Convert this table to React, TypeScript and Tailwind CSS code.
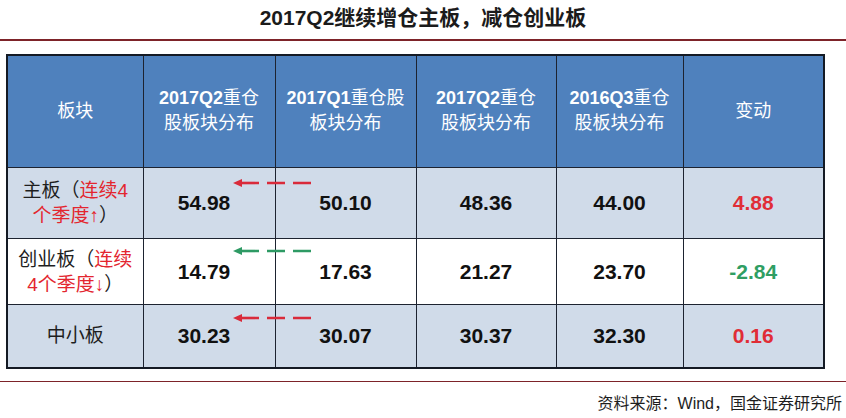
import React from "react";

const sans = "font-['Liberation_Sans','Noto_Sans_CJK_SC',sans-serif]";

const Arrow = ({ color, className }: { color: string; className: string }) => (
  <svg
    className={`absolute ${className}`}
    width="82"
    height="10"
    viewBox="0 0 82 10"
  >
    <polygon points="0,5 9,1 9,9" fill={color} />
    <line
      x1="8"
      y1="5"
      x2="82"
      y2="5"
      stroke={color}
      strokeWidth="2.6"
      strokeDasharray="18 8"
    />
  </svg>
);

const HeadCell = ({
  num,
  zh,
  width,
}: {
  num?: string;
  zh: React.ReactNode;
  width: string;
}) => (
  <th
    className={`${width} border border-[#1d2330] bg-[#4f81bd] px-1 text-center align-middle text-[18px] font-normal leading-[25px] text-white`}
  >
    {num && <span className="font-bold">{num}</span>}
    {zh}
  </th>
);

const rows = [
  {
    label: (
      <>
        主板（<span className="text-[#e3262f]">连续4</span>
        <br />
        <span className="text-[#e3262f]">个季度↑</span>）
      </>
    ),
    values: ["54.98", "50.10", "48.36", "44.00"],
    change: "4.88",
    changeColor: "text-[#e02d36]",
    bg: "bg-[#d0dbe9]",
    height: "h-[71px]",
  },
  {
    label: (
      <>
        创业板（<span className="text-[#e3262f]">连续</span>
        <br />
        <span className="text-[#e3262f]">4个季度↓</span>）
      </>
    ),
    values: ["14.79", "17.63", "21.27", "23.70"],
    change: "-2.84",
    changeColor: "text-[#2f9e63]",
    bg: "bg-white",
    height: "h-[66px]",
  },
  {
    label: <>中小板</>,
    values: ["30.23", "30.07", "30.37", "32.30"],
    change: "0.16",
    changeColor: "text-[#e02d36]",
    bg: "bg-[#d0dbe9]",
    height: "h-[63px]",
  },
];

export default function App() {
  return (
    <div className={`h-[418px] w-[846px] bg-white ${sans}`}>
      <div className="flex h-[39px] items-center justify-center pb-[4px] text-[21px] font-bold text-[#1b1b1b]">
        2017Q2继续增仓主板，减仓创业板
      </div>
      <div className="h-[1.5px] bg-[#7d2329]" />

      <div className="pl-[6px] pt-[13px]">
        <div className="relative w-[817px]">
          <table className="w-[817px] table-fixed border-collapse border-2 border-[#141a24]">
            <thead>
              <tr className="h-[113px]">
                <HeadCell width="w-[136px]" zh="板块" />
                <HeadCell
                  width="w-[132px]"
                  num="2017Q2"
                  zh={
                    <>
                      重仓
                      <br />
                      股板块分布
                    </>
                  }
                />
                <HeadCell
                  width="w-[141px]"
                  num="2017Q1"
                  zh={
                    <>
                      重仓股
                      <br />
                      板块分布
                    </>
                  }
                />
                <HeadCell
                  width="w-[140px]"
                  num="2017Q2"
                  zh={
                    <>
                      重仓
                      <br />
                      股板块分布
                    </>
                  }
                />
                <HeadCell
                  width="w-[127px]"
                  num="2016Q3"
                  zh={
                    <>
                      重仓
                      <br />
                      股板块分布
                    </>
                  }
                />
                <HeadCell width="w-[141px]" zh="变动" />
              </tr>
            </thead>
            <tbody>
              {rows.map((r, i) => (
                <tr key={i} className={`${r.height} ${r.bg}`}>
                  <td className="border border-[#1d2330] px-2 text-center text-[19px] leading-[25px] text-[#1e1e1e]">
                    {r.label}
                  </td>
                  {r.values.map((v, j) => (
                    <td
                      key={v}
                      className={`border border-[#1d2330] text-center text-[21px] font-bold text-[#111] ${
                        j === 0 ? "pr-[10px]" : ""
                      }`}
                    >
                      {v}
                    </td>
                  ))}
                  <td
                    className={`border border-[#1d2330] text-center text-[21px] font-bold ${r.changeColor}`}
                  >
                    {r.change}
                  </td>
                </tr>
              ))}
            </tbody>
          </table>

          <Arrow color="#d92a3a" className="left-[227px] top-[124px]" />
          <Arrow color="#2e9a64" className="left-[227px] top-[192px]" />
          <Arrow color="#d92a3a" className="left-[227px] top-[259px]" />
        </div>
      </div>

      <div className="mt-[12px] h-[1.5px] bg-[#7d2329]" />
      <div className="pr-[4px] pt-[12px] text-right text-[16px] leading-[20px] text-[#1e1e1e]">
        资料来源：Wind，国金证券研究所
      </div>
    </div>
  );
}
